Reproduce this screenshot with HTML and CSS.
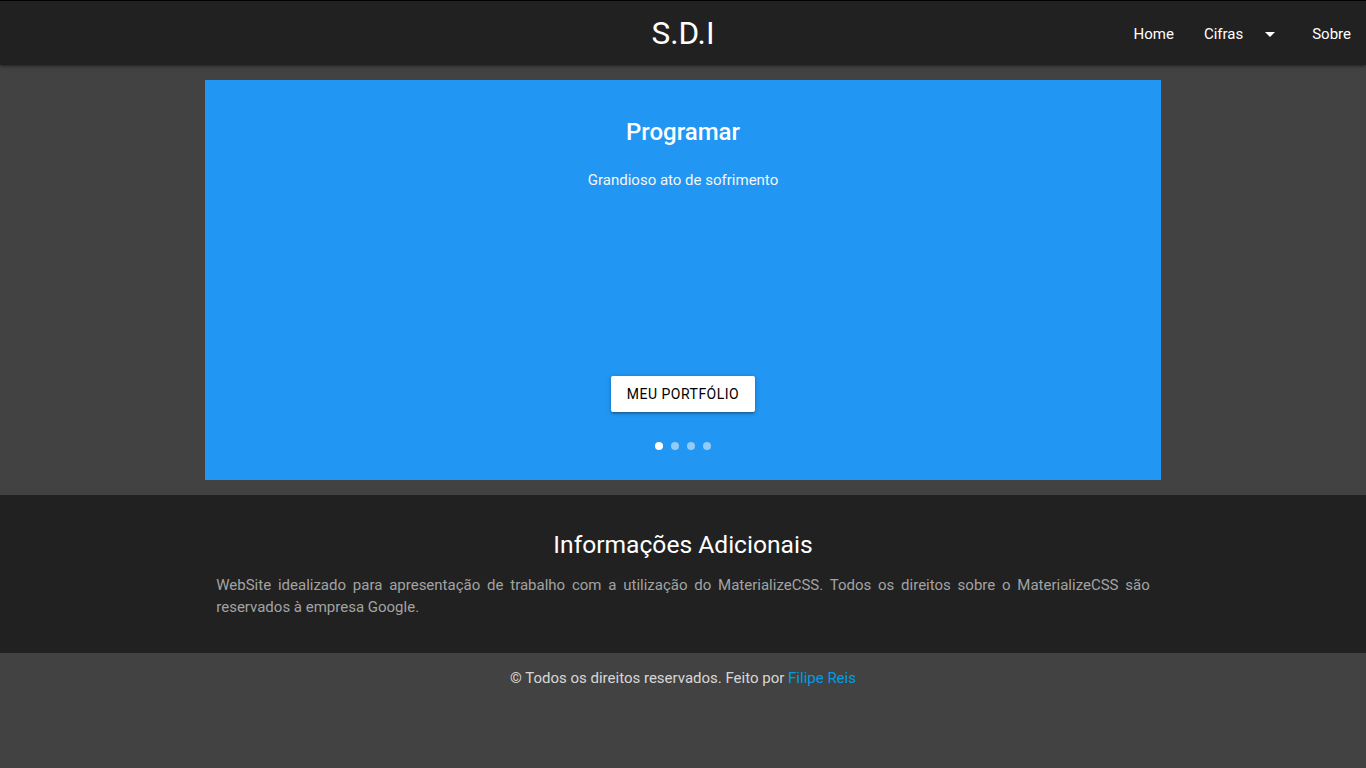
FILE: index.html
```
<!DOCTYPE html>
<html lang="pt">
<head>
<meta charset="utf-8">
<title>S.D.I</title>
<link rel="stylesheet" href="styles.css">
</head>
<body>
<header class="nav">
  <a class="brand" href="#">S.D.I</a>
  <ul class="menu">
    <li><a href="#">Home</a></li>
    <li><a href="#" class="dropdown">Cifras<svg class="caret" viewBox="0 0 24 24" width="24" height="24"><path d="M7 10l5 5 5-5z" fill="#fff"/></svg></a></li>
    <li><a href="#">Sobre</a></li>
  </ul>
</header>
<main class="main">
  <section class="slider">
    <div class="caption">
      <h3 class="slide-title">Programar</h3>
      <h5 class="slide-sub">Grandioso ato de sofrimento</h5>
    </div>
    <a class="btn" href="#">Meu Portfólio</a>
    <ul class="indicators">
      <li class="dot active"></li>
      <li class="dot"></li>
      <li class="dot"></li>
      <li class="dot"></li>
    </ul>
  </section>
</main>
<section class="info">
  <div class="container">
    <h5 class="info-title">Informações Adicionais</h5>
    <p class="info-text">WebSite idealizado para apresentação de trabalho com a utilização do MaterializeCSS. Todos os direitos sobre o MaterializeCSS são reservados à empresa Google.</p>
  </div>
</section>
<footer class="footer">
  <p class="copy">© Todos os direitos reservados. Feito por <a href="#">Filipe Reis</a></p>
</footer>
</body>
</html>
```
FILE: styles.css
```
* { box-sizing: border-box; }
html, body { margin: 0; padding: 0; }
body {
  background: #424242;
  font-family: Roboto, "Liberation Sans", sans-serif;
  font-size: 15px;
  line-height: 1.5;
  min-height: 768px;
  display: flex;
  flex-direction: column;
}
a { text-decoration: none; }
ul { list-style: none; margin: 0; padding: 0; }

.nav {
  position: relative;
  height: 65px;
  border-top: 1px solid #000;
  background: #212121;
  box-shadow: 0 2px 2px 0 rgba(0,0,0,0.14), 0 3px 1px -2px rgba(0,0,0,0.12), 0 1px 5px 0 rgba(0,0,0,0.2);
  display: flex;
  justify-content: flex-end;
  align-items: center;
  z-index: 2;
}
.brand {
  position: absolute;
  left: 50%;
  top: 0;
  transform: translateX(-50%);
  color: #fff;
  font-size: 31.5px;
  line-height: 64px;
  padding-top: 1px;
}
.menu { display: flex; height: 64px; }
.menu a {
  display: flex;
  align-items: center;
  height: 64px;
  padding: 2px 15px 0;
  color: #fff;
  font-size: 15px;
}
.caret { margin-left: 15px; display: block; }

.main { padding: 15px 0; }
.slider {
  width: 956px;
  height: 400px;
  margin: 0 auto;
  background: #2196f3;
  display: flex;
  flex-direction: column;
  align-items: center;
  color: #fff;
}
.caption { text-align: center; padding-top: 37px; }
.slide-title {
  margin: 0;
  font-size: 24px;
  font-weight: 500;
  line-height: 30px;
}
.slide-sub {
  margin: 23px 0 0;
  font-size: 15px;
  font-weight: 400;
  line-height: 20px;
  color: #f5f5f5;
}
.btn {
  margin-top: 186px;
  height: 36px;
  line-height: 36px;
  padding: 0 16px;
  background: #fff;
  color: #000;
  font-size: 14px;
  letter-spacing: 0.5px;
  text-transform: uppercase;
  border-radius: 2px;
  box-shadow: 0 2px 2px 0 rgba(0,0,0,0.14), 0 3px 1px -2px rgba(0,0,0,0.12), 0 1px 5px 0 rgba(0,0,0,0.2);
}
.indicators { display: flex; gap: 8px; margin-top: 30px; }
.dot {
  width: 8px;
  height: 8px;
  border-radius: 50%;
  background: rgba(255,255,255,0.5);
}
.dot.active { background: #fff; }

.info {
  background: #212121;
  height: 158px;
  padding-top: 20px;
}
.container { width: 956px; margin: 0 auto; padding: 0 11.25px; }
.info-title {
  margin: 15px 0 14px;
  text-align: center;
  color: #fff;
  font-size: 24.6px;
  font-weight: 400;
  line-height: 30px;
}
.info-text {
  margin: 0;
  color: #a3a3a3;
  font-size: 15px;
  line-height: 22px;
  text-align: justify;
}

.footer { flex: 1; background: #424242; padding-top: 14px; }
.copy {
  margin: 0;
  text-align: center;
  color: rgba(255,255,255,0.8);
  font-size: 15px;
  line-height: 22px;
}
.copy a { color: #039be5; }
```
